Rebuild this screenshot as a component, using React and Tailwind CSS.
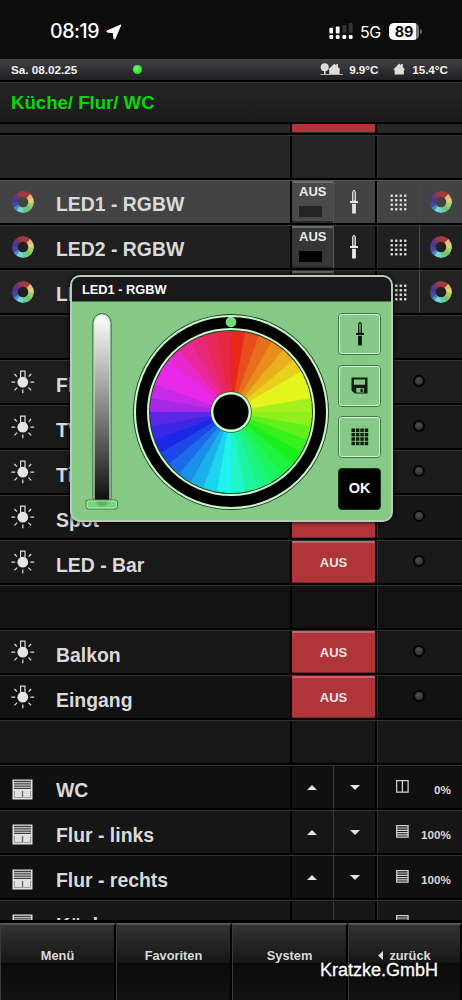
import React from 'react';
import clsx from 'clsx';

// segment colours, clockwise from the top, 10 degrees each
const WHEEL = [
  '#e8281c', '#e84e1c', '#e86e1c', '#e88c1c', '#e8b01c', '#e8d01c',
  '#e4f41c', '#e4f41c', '#a4f01c', '#90f01c', '#62f01c', '#38f01c',
  '#1cf01c', '#1cf440', '#1cf460', '#1cf480', '#1cf4a2', '#20f4c8',
  '#1cf4ec', '#1cd4ec', '#1cb0e8', '#1c90e8', '#1c6ce8', '#1c48e8',
  '#1c28e8', '#3c28e4', '#5c28e8', '#a828e8', '#c828e8', '#e828e8',
  '#e828e8', '#e828c8', '#e8289c', '#e82878', '#e82858', '#e82840',
];

// start angle and colour of each part of the small ring
const RING = [
  [-35, '#963a48'], [-5, '#a8383e'], [42, '#e6b878'], [68, '#dcd47c'],
  [95, '#a4cc6c'], [125, '#72c868'], [155, '#68cc94'], [180, '#70d8d0'],
  [218, '#4e84c4'], [240, '#3f4ca4'], [268, '#4a3690'], [298, '#6c3478'],
];

const ROWS = [
  { type: 'empty', bg: 'bg-[#242424]' },
  { type: 'led', name: 'LED1 - RGBW', bg: 'bg-[#434343]', active: true },
  { type: 'led', name: 'LED2 - RGBW', bg: 'bg-[#202020]' },
  { type: 'led', name: 'LED3 - RGBW', bg: 'bg-[#222222]' },
  { type: 'empty', bg: 'bg-[#1b1b1b]' },
  { type: 'light', name: 'Flur', bg: 'bg-[#1e1e1e]' },
  { type: 'light', name: 'TV', bg: 'bg-[#191919]' },
  { type: 'light', name: 'Tisch', bg: 'bg-[#1b1b1b]' },
  { type: 'light', name: 'Spot', bg: 'bg-[#161616]' },
  { type: 'light', name: 'LED - Bar', bg: 'bg-[#191919]' },
  { type: 'empty', bg: 'bg-[#121212]' },
  { type: 'light', name: 'Balkon', bg: 'bg-[#171717]' },
  { type: 'light', name: 'Eingang', bg: 'bg-[#111111]' },
  { type: 'empty', bg: 'bg-[#171717]' },
  { type: 'blind', name: 'WC', value: '0%', bg: 'bg-[#101010]' },
  { type: 'blind', name: 'Flur - links', value: '100%', bg: 'bg-[#161616]' },
  { type: 'blind', name: 'Flur - rechts', value: '100%', bg: 'bg-[#101010]' },
  { type: 'blind', name: 'Küche', value: '100%', bg: 'bg-[#161618]' },
];

function sector(cx, cy, r, from, to) {
  const point = (deg) => {
    const a = (deg * Math.PI) / 180;
    return `${(cx + r * Math.sin(a)).toFixed(2)} ${(cy - r * Math.cos(a)).toFixed(2)}`;
  };
  return `M${cx} ${cy}L${point(from)}A${r} ${r} 0 0 1 ${point(to)}Z`;
}

function RingIcon({ hole }) {
  return (
    <svg width="22" height="22" viewBox="0 0 22 22" className="shrink-0">
      <circle cx="11" cy="11" r="10.6" fill="#6c3478" />
      {RING.map(([start, c], i) => (
        <path key={i} d={sector(11, 11, 10.8, start, i < 11 ? RING[i + 1][0] + 6 : 325)} fill={c} />
      ))}
      <circle cx="11" cy="11" r="5.3" fill={hole} />
    </svg>
  );
}

function BulbIcon() {
  return (
    <svg width="24" height="24" viewBox="0 0 24 24" fill="none" stroke="#dedede" strokeWidth="1.2" className="shrink-0">
      <path d="M9.6 8V1.2h4.4V8" />
      <circle cx="11.8" cy="12.2" r="5.4" fill="#e6e6e6" stroke="none" />
      <path d="M.4 12.2h3.8M19.4 12.2h3.8M11.8 19.6v3.6M3.4 4l2.6 2.7M20.2 4l-2.6 2.7M3.4 20.4 6.2 17.6M20.2 20.4l-2.8-2.8" />
    </svg>
  );
}

function BlindIcon() {
  return (
    <svg width="21" height="21" viewBox="0 0 21 21" className="shrink-0">
      <path d="M.5.5h20v20H.5z" fill="#e0e0e0" />
      <path d="M2 2.5h17M2 4.8h17M2 7.1h17M2 9.4h17" stroke="#404040" strokeWidth="1.3" />
      <path d="M2.5 12v6.5h7.7V12M11.5 18.5h7V12" fill="none" stroke="#9a9a9a" strokeWidth="1" />
      <path d="M10.7 12v6.5" stroke="#555" strokeWidth="1" />
    </svg>
  );
}

function FaderIcon({ dark }) {
  const c = dark ? '#0c1a0c' : '#e6e6e6';
  return (
    <svg width="10" height="26" viewBox="0 0 10 26" className="shrink-0">
      <path d="M3.6 12V3l1.4-2 1.4 2v9z" fill={dark ? '#5c8f5c' : '#777'} stroke={c} strokeWidth="1" />
      <path d="M1 12h8v2H1zM3.1 14.8h3.8v9.8H3.1z" fill={c} />
    </svg>
  );
}

function DotPattern() {
  return (
    <svg width="17" height="17" viewBox="0 0 17 17" fill="#e2e2e2">
      {[0, 1, 2, 3].map((y) =>
        [0, 1, 2, 3].map((x) => (
          <rect key={`${x}-${y}`} x={x * 4.5 + 0.6} y={y * 4.5 + 0.6} width="2.3" height="2.3" />
        ))
      )}
    </svg>
  );
}

function HouseIcon() {
  return (
    <svg width="12" height="12" viewBox="0 0 12 12" fill="#dcdcdc" className="shrink-0">
      <path d="M.3 6.4 6.2.6l1.8 1.7V1h1.8v3.1l2 2.3-.9.9V11.5H1.6V7.1z" />
    </svg>
  );
}

function TreeHouseIcon() {
  return (
    <svg width="23" height="12" viewBox="0 0 23 12" fill="#dcdcdc" className="shrink-0">
      <circle cx="4.7" cy="4.3" r="4" />
      <path d="M4 6h1.6v5H4zM.5 10.9H23v.8H.5zM8.3 6.4 14.3.8l2 1.7V1H18v2.9l2.2 2.4-.6.8v4.1H9.2V7z" />
    </svg>
  );
}

function StatusBar() {
  return (
    <div className="flex h-[59px] shrink-0 items-center bg-[#0c0c0c] pt-[4px] pr-[40px] pl-[50px] font-['Inter',sans-serif] text-white">
      <span className="w-[52px] text-[19.5px] font-medium tracking-[-0.4px] whitespace-nowrap">08:19</span>
      <svg width="16" height="16" viewBox="0 0 16 16" className="ml-[4px]" fill="#fff">
        <path d="M14.9.9 8.9 14.8c-.3.5-.9.4-1-.2L7.3 8.7 1.3 8c-.6-.1-.7-.8-.2-1z" stroke="#fff" strokeWidth="1" strokeLinejoin="round" />
      </svg>
      <svg width="25" height="17" viewBox="0 0 25 17" className="ml-auto" fill="#fff">
        <rect x="13.4" y="2" width="4" height="8" rx="1" fill="#333" />
        <rect x="19.7" y="0" width="4" height="10" rx="1" fill="#333" />
        <rect x=".4" y="4.8" width="3.6" height="5.6" rx="1" />
        <rect x="6.8" y="3.4" width="3.8" height="7" rx="1" />
        {[0.4, 6.8, 13.4, 19.8].map((x) => (
          <rect key={x} x={x} y="12.1" width="3.8" height="3.8" rx="1.2" />
        ))}
      </svg>
      <span className="ml-[6px] w-[22px] text-[16px] tracking-[-0.6px]">5G</span>
      <span className="ml-[7px] flex h-[17px] w-[30px] items-center justify-center rounded-[5px] bg-[linear-gradient(90deg,#fff_90%,#777_90%)] text-[14.5px] font-bold tracking-[-0.3px] text-[#0c0c0c]">
        89
      </span>
      <span className="ml-[1px] h-[5px] w-[2px] rounded-r-full bg-[#666]" />
    </div>
  );
}

function InfoBar() {
  return (
    <div className="flex h-[23px] shrink-0 items-center border-b-2 border-black bg-linear-to-b from-[#434345] to-[#1f1f21] pr-[14px] pl-[11px] text-[11.7px] font-bold text-[#f2f2f2]">
      <span className="w-[122px]">Sa. 08.02.25</span>
      <span className="h-[9px] w-[9px] rounded-full bg-[radial-gradient(circle_at_40%_35%,#6cff6c,#18c818)]" />
      <div className="ml-auto flex items-center">
        <TreeHouseIcon />
        <span className="ml-[6px] w-[44px]">9.9°C</span>
        <HouseIcon />
        <span className="ml-[7px]">15.4°C</span>
      </div>
    </div>
  );
}

function AusButton() {
  return (
    <div className="flex h-[42px] w-[83px] items-center justify-center border-t-2 border-b border-t-[#b8686a] border-b-[#7c2426] bg-[#b03538] text-[13px] font-bold text-[#f0e4e4]">
      AUS
    </div>
  );
}

function RowControls({ row }) {
  if (row.type === 'led') {
    return (
      <>
        <div className={clsx('flex w-[41px] flex-col border-t-2 border-b-2 border-t-[#6a6a6a] border-b-[#2a2a2a] pt-[1px] pl-[7px]', row.active ? 'bg-[#4a4a4a]' : 'bg-[#363636]')}>
          <span className="text-[13px] leading-[16px] font-bold text-[#ececec]">AUS</span>
          <span className={clsx('mt-[6px] h-[11px] w-[23px]', row.active ? 'bg-[#242424]' : 'bg-black')} />
        </div>
        <div className="flex flex-1 items-center justify-center border-l border-[#555] pr-[1px]">
          <FaderIcon />
        </div>
      </>
    );
  }
  if (row.type === 'light') return <AusButton />;
  if (row.type === 'blind') {
    return (
      <>
        <div className="flex w-[42px] items-center justify-center border-r border-[#3a3a3a] pr-[2px]">
          <svg width="10" height="5" viewBox="0 0 10 5" fill="#e2e2e2"><path d="M0 5 5 0l5 5z" /></svg>
        </div>
        <div className="flex flex-1 items-center justify-center">
          <svg width="10" height="5" viewBox="0 0 10 5" fill="#e2e2e2"><path d="M0 0h10L5 5z" /></svg>
        </div>
      </>
    );
  }
  return null;
}

function RowStatus({ row }) {
  if (row.type === 'led') {
    return (
      <>
        <div className="flex w-[42px] items-center justify-center border-r border-[#4a4a4a]">
          <DotPattern />
        </div>
        <div className="flex flex-1 items-center justify-center">
          <RingIcon hole={row.active ? '#434343' : '#202020'} />
        </div>
      </>
    );
  }
  if (row.type === 'light') {
    return (
      <div className="flex flex-1 items-center justify-center pr-[3px] pb-[2px]">
        <span className="h-[12px] w-[12px] rounded-full border-2 border-[#030303] bg-[radial-gradient(circle_at_45%_35%,#505050,#262626)]" />
      </div>
    );
  }
  if (row.type === 'blind') {
    return (
      <div className="flex flex-1 items-center pr-[11px] pl-[18px]">
        <svg width="13" height="13" viewBox="0 0 13 13" className="mb-[2px]" fill="none" stroke="#d8d8d8" strokeWidth="1.2">
          <path d="M.7.7h11.4v11.4H.7z" />
          {row.value === '0%' ? <path d="M6.4.7v11.4" /> : <path d="M1 3h11M1 5.3h11M1 7.6h11M1 9.9h11" />}
        </svg>
        <span className="ml-auto pt-[5px] text-[11.7px] font-bold text-[#d8d8d8]">{row.value}</span>
      </div>
    );
  }
  return null;
}

function Row({ row }) {
  const line = row.active ? 'border-[#555]' : 'border-[#303030]';
  const hole = row.active ? '#434343' : '#202020';
  return (
    <div className={clsx('flex h-[45px] shrink-0 border-t border-b-2 border-b-black', row.active ? 'border-t-[#555]' : 'border-t-[#333]', row.bg)}>
      <div className="flex w-[290px] items-center">
        <div className="ml-[11px] flex w-[45px] items-center">
          {row.type === 'led' && <span className="ml-[1px]"><RingIcon hole={hole} /></span>}
          {row.type === 'light' && <BulbIcon />}
          {row.type === 'blind' && <span className="mt-[4px] ml-[1px]"><BlindIcon /></span>}
        </div>
        <span className={clsx('text-[19.4px] font-bold text-[#dadada]', row.type === 'led' ? 'pt-[6px]' : 'pt-[7px]')}>{row.name}</span>
      </div>
      <div className={clsx('flex w-[85px] border-l-2 border-l-black', line)}>
        <RowControls row={row} />
      </div>
      <div className="w-[2px] bg-black" />
      <div className={clsx('flex flex-1 border-l', line)}>
        <RowStatus row={row} />
      </div>
    </div>
  );
}

function DialogButton({ children }) {
  return (
    <div className="flex h-[42px] w-[43px] items-center justify-center rounded-[4px] border border-[#3f7a42]">
      <div className="flex h-full w-full items-center justify-center rounded-[3px] border border-[#d4f6d4]">{children}</div>
    </div>
  );
}

function ColorWheel() {
  return (
    <svg width="198" height="198" viewBox="-99 -99 198 198" className="shrink-0">
      <circle r="98" fill="#1d3d1f" />
      <circle r="97.1" fill="#caf5ca" />
      <circle r="95" fill="#000" />
      <circle r="84" fill="#d0f8d0" />
      <circle r="82" fill="#1d3d1f" />
      {/* each segment runs under the next one so no seam shows */}
      {WHEEL.map((c, i) => (
        <path key={i} d={sector(0, 0, 81, i * 10, i < 35 ? i * 10 + 14 : 360)} fill={c} />
      ))}
      <circle r="20.8" fill="#2c5c2c" />
      <circle r="20" fill="#d0f8d0" />
      <circle r="17.6" fill="#000" />
      <circle cy="-90" r="4.9" fill="#6fe06f" stroke="#b4f4b4" strokeWidth=".7" />
    </svg>
  );
}

function ColorDialog() {
  return (
    <div className="absolute top-[275px] left-[70px] flex h-[247px] w-[323px] flex-col overflow-hidden rounded-[10px] border-2 border-[#b9ccb9] bg-[#86c986] shadow-[0_0_5px_#000]">
      <div className="flex h-[25px] shrink-0 items-center border-b border-[#4c744c] bg-[#19181a] pt-[2px] pl-[10px] text-[12.8px] font-bold text-white">
        LED1 - RGBW
      </div>
      <div className="flex flex-1">
        <svg width="34" height="200" viewBox="0 0 34 200" className="mt-[10px] ml-[13px] shrink-0">
          <defs>
            <linearGradient id="brightness" x1="0" y1="0" x2="0" y2="1">
              <stop offset="0" stopColor="#fff" />
              <stop offset="1" stopColor="#080808" />
            </linearGradient>
          </defs>
          <rect x="7.9" y="1.6" width="18.2" height="193" rx="9" fill="#c8eec8" stroke="#356038" strokeWidth="1" />
          <rect x="9.6" y="3.3" width="14.8" height="190.5" rx="7.4" fill="url(#brightness)" />
          <rect x="1" y="188" width="31.5" height="9" rx="2.5" fill="#76d67a" fillOpacity=".82" stroke="#41764a" strokeWidth="1" />
          <rect x="2" y="189" width="29.5" height="7" rx="2" fill="none" stroke="#b8f0b8" strokeWidth=".9" />
        </svg>
        <div className="mt-[11px] ml-[13px]">
          <ColorWheel />
        </div>
        <div className="mt-[11px] ml-[8px] flex flex-col gap-[9.5px]">
          <DialogButton><FaderIcon dark /></DialogButton>
          <DialogButton>
            <svg width="17" height="17" viewBox="0 0 17 17">
              <path d="M.5.5h16v16H4L.5 13.5z" fill="#102010" />
              <path d="M3 2.5h11v5.2H3zM5.3 11h7.5v4.5H5.3z" fill="#86c986" />
              <path d="M9.4 11.8h2.4v3.2H9.4z" fill="#102010" />
            </svg>
          </DialogButton>
          <DialogButton>
            <svg width="18" height="18" viewBox="0 0 18 18" fill="#102010">
              {[0, 1, 2, 3].map((y) =>
                [0, 1, 2, 3].map((x) => <rect key={`${x}${y}`} x={x * 4.4 + 0.5} y={y * 4.4 + 0.5} width="3.5" height="3.5" />)
              )}
            </svg>
          </DialogButton>
          <div className="flex h-[42px] w-[43px] items-center justify-center rounded-[4px] border border-[#16301a] bg-black text-[14.5px] font-bold text-white">
            OK
          </div>
        </div>
      </div>
    </div>
  );
}

function Footer() {
  return (
    <div className="relative grid h-[80px] shrink-0 grid-cols-[116px_116px_116px_114px] bg-black pt-[3px]">
      {['Menü', 'Favoriten', 'System', 'zurück'].map((label) => (
        <div
          key={label}
          className="flex items-center justify-center border-t-2 border-r-2 border-l border-t-[#555558] border-r-black border-l-[#3a3a3a] bg-[linear-gradient(#323234_0%,#161616_50%,#0a0a0a_51%,#121212_100%)] pb-[14px] text-[12.8px] font-bold text-[#dadada]"
        >
          {label === 'zurück' && (
            <svg width="5" height="9" viewBox="0 0 5 9" className="mr-[6px]" fill="#dadada"><path d="M5 0v9L0 4.5z" /></svg>
          )}
          {label}
        </div>
      ))}
      <span className="absolute top-[39px] left-[320px] text-[18px] leading-[22px] text-white [-webkit-text-stroke:0.3px_white]">
        Kratzke.GmbH
      </span>
    </div>
  );
}

export default function App() {
  return (
    <div className="relative flex h-[1000px] w-[462px] flex-col overflow-hidden bg-black font-['Liberation_Sans',Arial,sans-serif]">
      <StatusBar />
      <InfoBar />
      <div className="flex h-[42px] shrink-0 items-center border-t border-b-2 border-t-[#363636] border-b-black bg-linear-to-b from-[#242424] to-[#1b1b1b] pt-[1px] pl-[11px] text-[18.6px] font-bold text-[#08d808]">
        Küche/ Flur/ WC
      </div>
      <div className="flex h-[796px] shrink-0 flex-col overflow-hidden">
        <div className="flex h-[11px] shrink-0 border-b-2 border-black bg-[#272727]">
          <div className="w-[290px]" />
          <div className="w-[85px] border-l-2 border-black pb-[1px]">
            <div className="h-full w-[83px] bg-[#b03538]" />
          </div>
          <div className="w-[2px] bg-black" />
        </div>
        {ROWS.map((row, i) => (
          <Row key={i} row={row} />
        ))}
      </div>
      <Footer />
      <ColorDialog />
    </div>
  );
}
